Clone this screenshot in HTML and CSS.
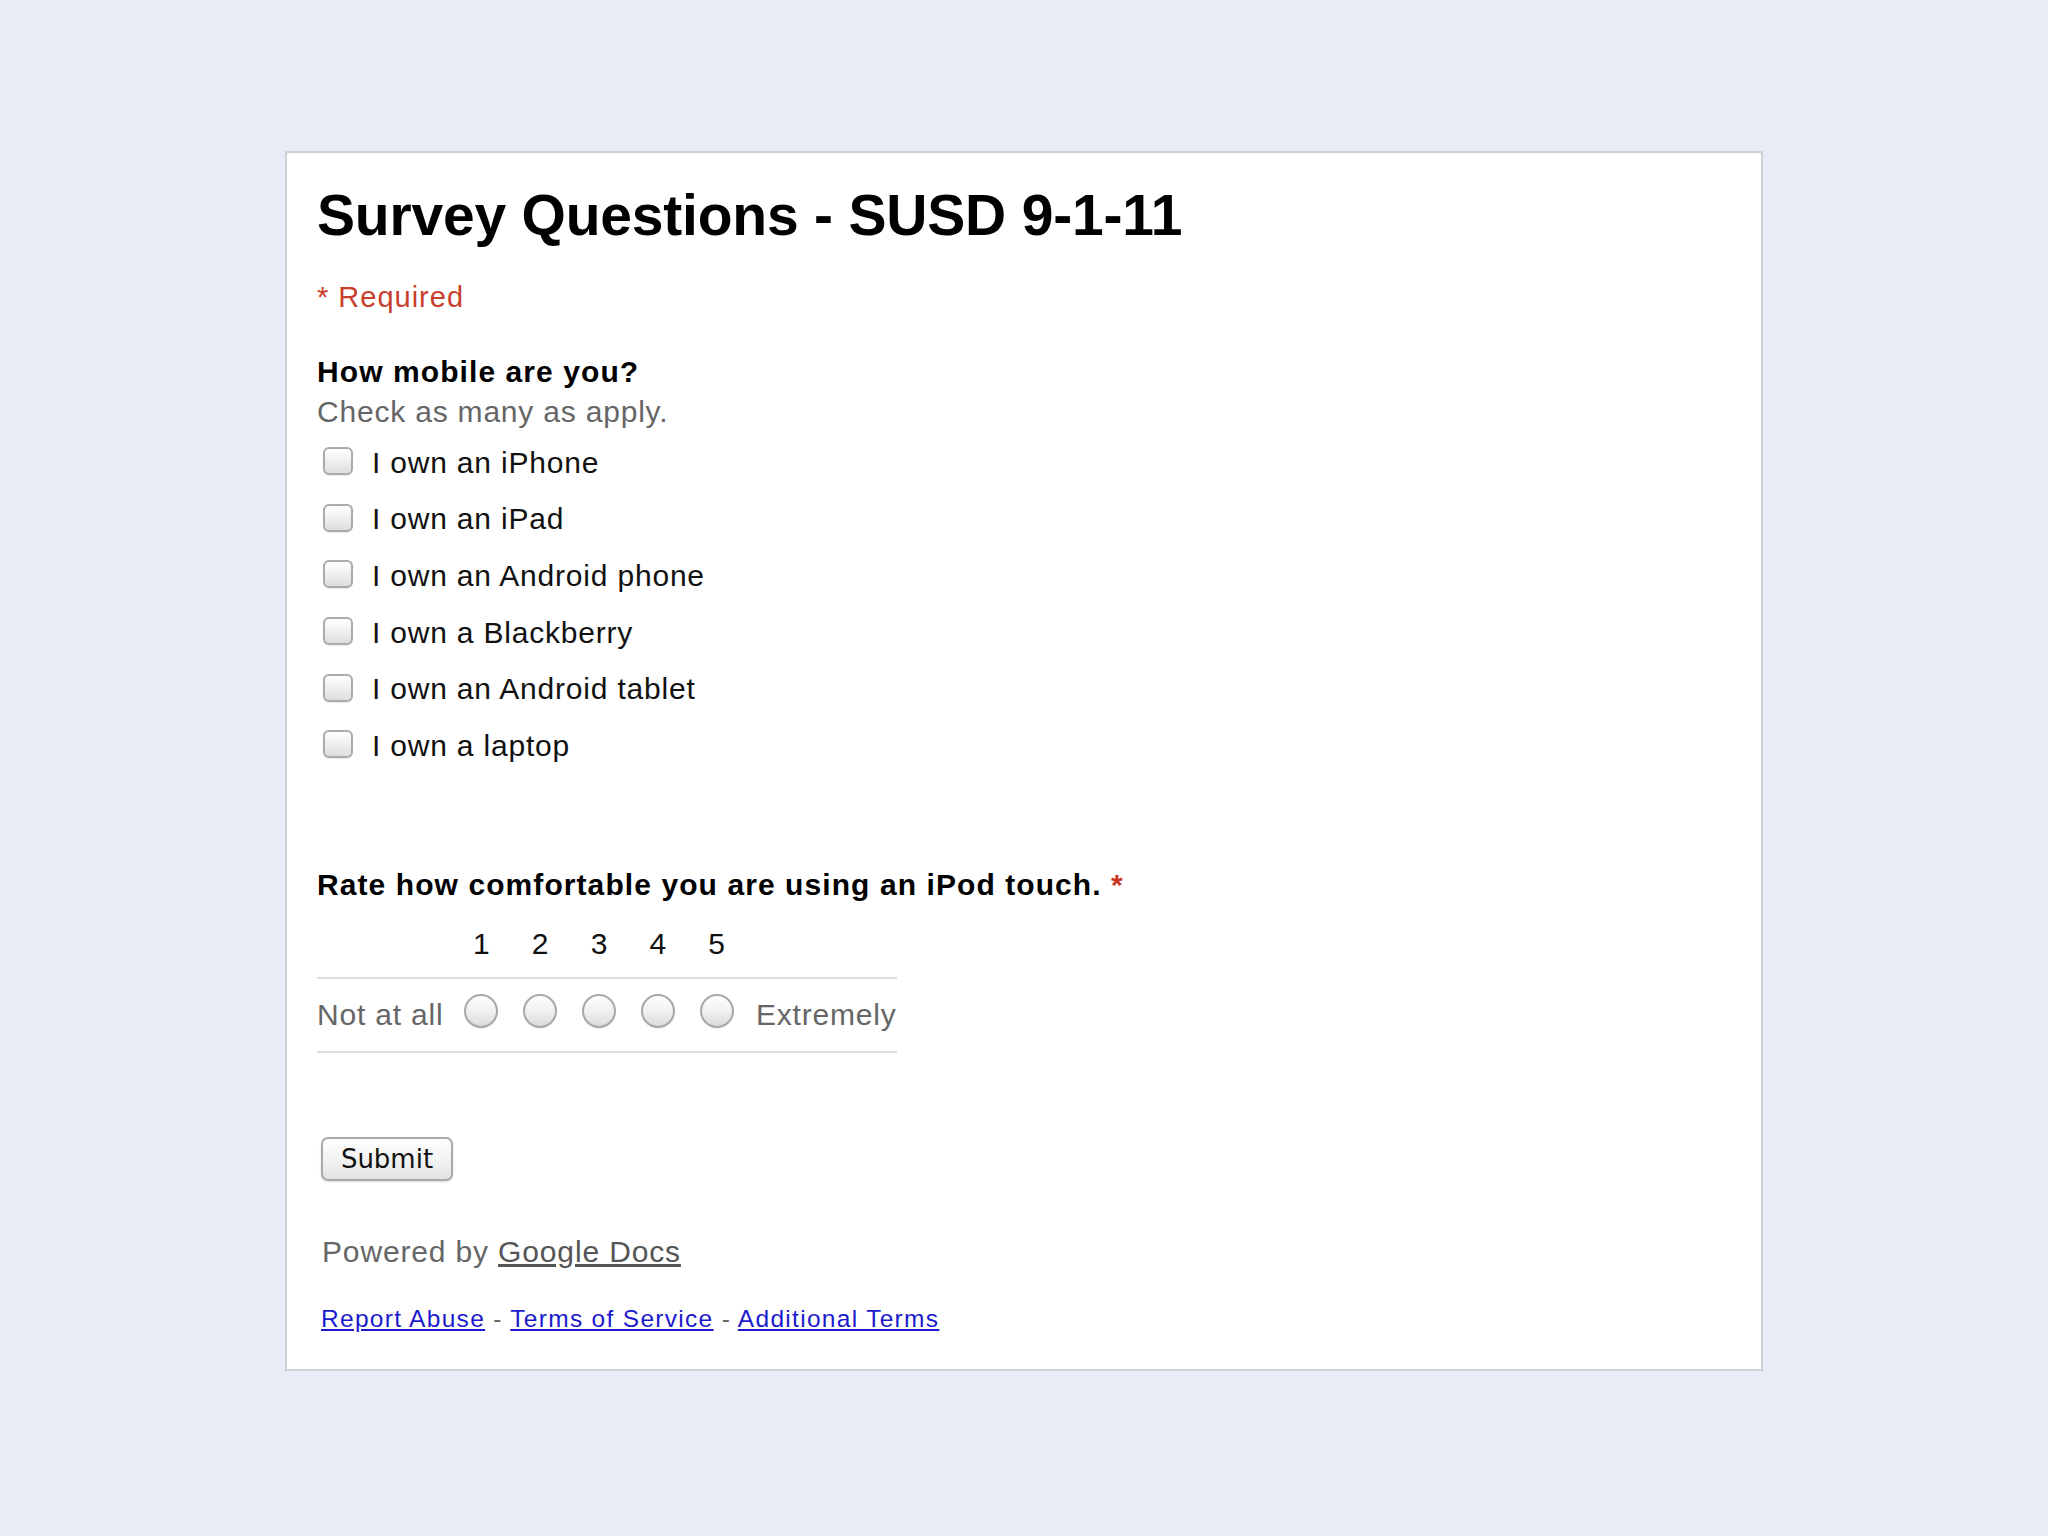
FILE: index.html
```html
<!DOCTYPE html>
<html>
<head>
<meta charset="utf-8">
<title>Survey Questions - SUSD 9-1-11</title>
<link rel="stylesheet" href="styles.css">
</head>
<body>
<div class="card">
  <h1 class="title">Survey Questions - SUSD 9-1-11</h1>
  <div class="required">* Required</div>

  <div class="question q1">
    <div class="q-title">How mobile are you?</div>
    <div class="q-help">Check as many as apply.</div>
    <ul class="options">
      <li class="option"><input type="checkbox" class="cb"><span class="opt-label">I own an iPhone</span></li>
      <li class="option"><input type="checkbox" class="cb"><span class="opt-label">I own an iPad</span></li>
      <li class="option"><input type="checkbox" class="cb"><span class="opt-label">I own an Android phone</span></li>
      <li class="option"><input type="checkbox" class="cb"><span class="opt-label">I own a Blackberry</span></li>
      <li class="option"><input type="checkbox" class="cb"><span class="opt-label">I own an Android tablet</span></li>
      <li class="option"><input type="checkbox" class="cb"><span class="opt-label">I own a laptop</span></li>
    </ul>
  </div>

  <div class="question q2">
    <div class="q-title">Rate how comfortable you are using an iPod touch. <span class="star">*</span></div>
    <div class="scale">
      <div class="scale-row scale-head">
        <span class="cell-label"></span>
        <span class="cell">1</span>
        <span class="cell">2</span>
        <span class="cell">3</span>
        <span class="cell">4</span>
        <span class="cell">5</span>
        <span class="cell-end"></span>
      </div>
      <div class="scale-row scale-body">
        <span class="cell-label">Not at all</span>
        <span class="cell"><input type="radio" name="r" class="rb"></span>
        <span class="cell"><input type="radio" name="r" class="rb"></span>
        <span class="cell"><input type="radio" name="r" class="rb"></span>
        <span class="cell"><input type="radio" name="r" class="rb"></span>
        <span class="cell"><input type="radio" name="r" class="rb"></span>
        <span class="cell-end">Extremely</span>
      </div>
    </div>
  </div>

  <button class="submit" type="button">Submit</button>

  <div class="powered">Powered by <a class="gdocs" href="#">Google Docs</a></div>
  <div class="links"><a href="#">Report Abuse</a> - <a href="#">Terms of Service</a> - <a href="#">Additional Terms</a></div>
</div>
</body>
</html>
```

FILE: styles.css
```css
html, body {
  margin: 0;
  padding: 0;
}
body {
  background: #e8ecf6;
  font-family: "Liberation Sans", Arial, Helvetica, sans-serif;
  color: #000;
  padding-top: 151px;
  padding-bottom: 165px;
}
.card {
  box-sizing: border-box;
  width: 1478px;
  margin: 0 auto;
  background: #fff;
  border: 2px solid #cdd1d8;
  padding: 29px 30px 34px 30px;
}
.title {
  margin: 0;
  font-size: 57px;
  line-height: 66px;
  font-weight: bold;
  letter-spacing: -0.2px;
}
.required {
  margin-top: 29px;
  font-size: 29px;
  line-height: 40px;
  color: #c8402d;
  letter-spacing: 1px;
}
.question {
  font-size: 30px;
}
.q1 {
  margin-top: 35px;
}
.q-title {
  font-weight: bold;
  font-size: 30px;
  line-height: 40px;
  letter-spacing: 1.08px;
}
.q-help {
  line-height: 40px;
  color: #666;
  letter-spacing: 0.8px;
}
.options {
  list-style: none;
  margin: 2.6px 0 0 0;
  padding: 0;
}
.option {
  display: flex;
  align-items: center;
  height: 56.7px;
  line-height: 56.7px;
}
.cb {
  appearance: none;
  -webkit-appearance: none;
  box-sizing: border-box;
  width: 30px;
  height: 28px;
  margin: 0 19px 4px 6px;
  border: 2px solid #ababab;
  border-radius: 6px;
  background: linear-gradient(#ffffff, #f1f1f1 45%, #dedede);
  box-shadow: 0 1px 1px rgba(0,0,0,0.08);
}
.opt-label {
  color: #111;
  letter-spacing: 0.8px;
}
.q2 {
  margin-top: 90px;
}
.star {
  color: #cc3322;
}
.scale {
  display: inline-block;
  margin-top: 19px;
}
.scale-row {
  display: grid;
  grid-template-columns: 135px repeat(5, 58.8px) auto;
  align-items: center;
  line-height: 40px;
}
.scale-head {
  padding-bottom: 13px;
}
.scale-body {
  border-top: 2px solid #dcdcdc;
  border-bottom: 2px solid #dcdcdc;
  padding: 16px 0;
}
.cell {
  text-align: center;
  color: #111;
  display: flex;
  justify-content: center;
  align-items: center;
  height: 40px;
}
.cell-label {
  color: #666;
  letter-spacing: 0.8px;
}
.cell-end {
  color: #666;
  letter-spacing: 0.8px;
  padding-left: 10px;
}
.rb {
  appearance: none;
  -webkit-appearance: none;
  box-sizing: border-box;
  width: 34px;
  height: 34px;
  margin: 0 0 8px 0;
  border: 2px solid #a8a8a8;
  border-radius: 50%;
  background: linear-gradient(#ffffff, #f0f0f0 50%, #dcdcdc);
  box-shadow: 0 1px 1px rgba(0,0,0,0.06);
}
.submit {
  display: block;
  box-sizing: border-box;
  margin: 84px 0 0 4px;
  width: 132px;
  height: 44px;
  padding: 0;
  font-family: "DejaVu Sans", "Liberation Sans", sans-serif;
  font-size: 26px;
  color: #111;
  border: 2px solid #a9a9a9;
  border-radius: 7px;
  background: linear-gradient(#ffffff, #f3f3f3 50%, #e2e2e2);
  box-shadow: 0 1px 2px rgba(0,0,0,0.15);
}
.powered {
  margin: 51px 0 0 5px;
  font-size: 30px;
  line-height: 40px;
  color: #666;
  letter-spacing: 0.85px;
}
.gdocs {
  color: #555;
  text-decoration: underline;
}
.links {
  margin: 31px 0 0 4px;
  font-size: 24.5px;
  line-height: 32px;
  color: #666;
  letter-spacing: 1.3px;
}
.links a {
  color: #1a1acc;
  text-decoration: underline;
}
```
